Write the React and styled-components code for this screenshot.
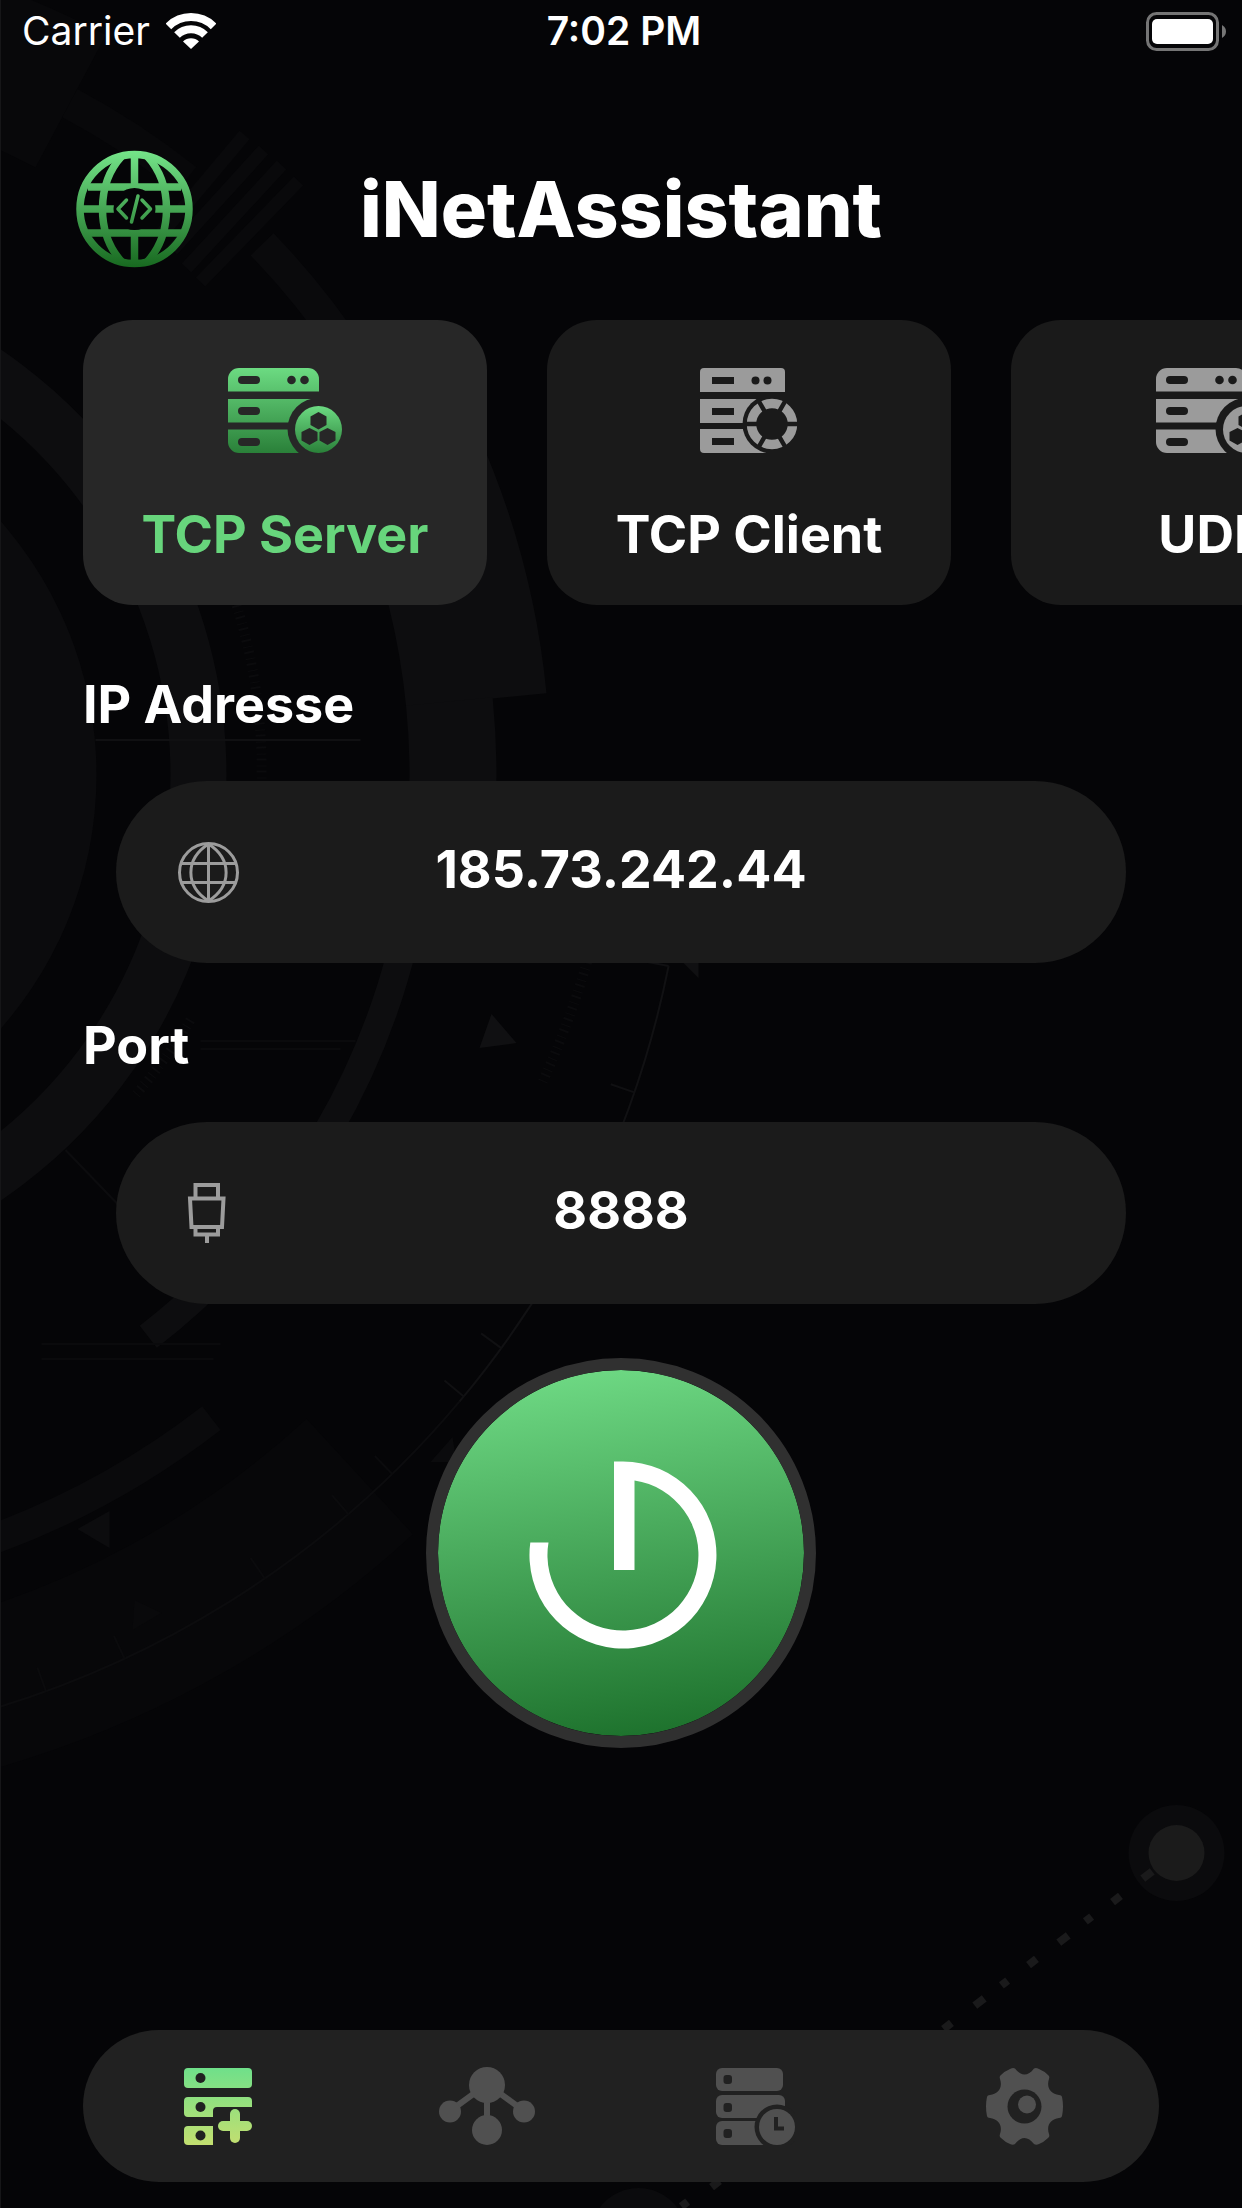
import { useId, useState } from 'react';
import styled, { createGlobalStyle } from 'styled-components';

const GlobalStyle = createGlobalStyle`
  *,
  *::before,
  *::after {
    box-sizing: border-box;
  }

  body {
    margin: 0;
    background-color: #050507;
    color: #fff;
    font-family: Inter, 'Liberation Sans', sans-serif;
  }

  button,
  input {
    font: inherit;
    color: inherit;
    border: none;
    background: none;
    padding: 0;
    margin: 0;
  }

  button {
    cursor: pointer;
  }

  svg {
    display: block;
    flex-shrink: 0;
  }
`;

const Screen = styled.div`
  position: relative;
  isolation: isolate;
  overflow: hidden;
  min-height: 100vh;
  display: flex;
  flex-direction: column;
  padding-bottom: 26px;
`;

const BackdropSvg = styled.svg`
  position: absolute;
  inset: 0;
  z-index: -1;
  width: 100%;
  height: 100%;
  border-left: 1px solid #161618;
`;

const StatusBar = styled.div`
  display: grid;
  grid-template-columns: 1fr auto 1fr;
  align-items: center;
  height: 62px;
  padding: 0 16px 0 22px;
  font-size: 39px;
  line-height: 48px;
`;

const Network = styled.div`
  display: flex;
  align-items: center;
  gap: 16px;
`;

const Time = styled.time`
  font-weight: 600;
`;

const Battery = styled.div`
  display: flex;
  justify-content: flex-end;
`;

const Header = styled.header`
  display: grid;
  grid-template-columns: 118px 1fr 118px;
  align-items: center;
  margin-top: 88px;
  padding: 0 76px;
`;

const Title = styled.h1`
  margin: 0;
  font-size: 77px;
  font-weight: 800;
  line-height: 96px;
  text-align: center;
`;

const Modes = styled.nav`
  display: flex;
  gap: 60px;
  margin-top: 52px;
  padding: 0 83px;
  overflow-x: auto;
  scrollbar-width: none;
`;

const ModeCard = styled.button`
  flex: 0 0 404px;
  display: flex;
  flex-direction: column;
  align-items: center;
  gap: 50px;
  padding: 48px 0 38px;
  border-radius: 50px;
  background-color: ${(props) => (props.$active ? '#272727' : '#1a1a1a')};
  color: ${(props) => (props.$active ? '#67d57c' : '#fff')};
  font-size: 52px;
  font-weight: 700;
  line-height: 64px;
`;

const Form = styled.form`
  display: flex;
  flex-direction: column;
  gap: 51px;
  margin-top: 68px;
  padding: 0 83px;
`;

const FormRow = styled.div`
  display: flex;
  flex-direction: column;
  gap: 44px;
`;

const Label = styled.label`
  font-size: 52px;
  font-weight: 700;
  line-height: 64px;
`;

const Field = styled.div`
  display: grid;
  grid-template-columns: 61px 1fr 61px;
  align-items: center;
  height: 182px;
  margin: 0 33px;
  padding: 0 62px;
  border-radius: 91px;
  background-color: #1b1b1b;
  color: #9c9c9c;
`;

const Input = styled.input`
  width: 100%;
  min-width: 0;
  padding-bottom: 4px;
  color: #fff;
  font-size: 52px;
  font-weight: 700;
  line-height: 64px;
  text-align: center;
  outline: none;
`;

const PowerButton = styled.button`
  align-self: center;
  display: grid;
  place-items: center;
  width: 390px;
  height: 390px;
  margin: 54px 0;
  border: 12px solid #303030;
  border-radius: 50%;
  background: linear-gradient(172deg, #72de88, #196c28) padding-box;
`;

const TabBar = styled.nav`
  display: grid;
  grid-template-columns: repeat(4, 1fr);
  height: 152px;
  margin: auto 83px 0;
  border-radius: 76px;
  background-color: #212121;
`;

const Tab = styled.button`
  display: grid;
  place-items: center;
  color: #505050;
`;

// Rings of the backdrop share one centre, angles are in degrees below the horizon
const CX = -288;
const CY = 775;

function polar(r, deg) {
  const a = (deg * Math.PI) / 180;
  return [CX + r * Math.cos(a), CY + r * Math.sin(a)];
}

function Arc({ from, to, inner, outer, color = '#0d0d0f' }) {
  const r = (inner + outer) / 2;
  const [x1, y1] = polar(r, from);
  const [x2, y2] = polar(r, to);

  return (
    <path
      d={`M${x1} ${y1}A${r} ${r} 0 0 1 ${x2} ${y2}`}
      fill='none'
      stroke={color}
      strokeWidth={outer - inner}
    />
  );
}

const ticks = [11.3, 19, 36, 39.6, 45.8, 49.3, 55.5, 65, 70];

const hatches = [
  [244, 135, 160, 235],
  [263, 150, 172, 250],
  [281, 165, 186, 268],
  [298, 181, 200, 282],
];

// x, y and length of every dash on the route between the two nodes
const dashes = [
  [1147, 1875, 12],
  [1116, 1899, 10],
  [1088, 1919, 8],
  [1063, 1939, 12],
  [1032, 1962, 10],
  [1004, 1983, 8],
  [979, 2002, 12],
  [947, 2026, 10],
  [715, 2184, 10],
  [684, 2204, 8],
];

function Backdrop() {
  return (
    <BackdropSvg
      viewBox='0 0 1242 2208'
      preserveAspectRatio='xMidYMid slice'
      aria-hidden='true'
    >
      <circle cx={CX} cy={CY} r='384' fill='#0b0b0d' />
      <Arc from={-70} to={70} inner={458} outer={514} />
      <Arc from={-80} to={-62} inner={688} outer={838} color='#08080a' />
      <Arc from={-62} to={-51.5} inner={745} outer={777} color='#08080a' />
      <Arc from={-44} to={-24} inner={748} outer={780} color='#0a0a0c' />
      <Arc from={-24} to={-5.6} inner={697} outer={838} />
      <Arc from={-5.7} to={8} inner={697} outer={784} />
      <Arc from={8} to={52.2} inner={697} outer={725} />
      <Arc from={52.2} to={75} inner={799} outer={829} color='#0a0a0c' />
      <Arc from={47.3} to={76} inner={876} outer={1033} color='#070709' />
      <Arc from={11.3} to={40} inner={974} outer={976} color='#111113' />
      <Arc from={40} to={76} inner={974} outer={976} color='#0c0c0e' />

      {ticks.map((deg) => {
        const [x1, y1] = polar(975, deg);
        const [x2, y2] = polar(950, deg);
        return (
          <line
            key={deg}
            x1={x1}
            y1={y1}
            x2={x2}
            y2={y2}
            stroke={deg > 40 ? '#0b0b0d' : '#101012'}
            strokeWidth='2'
          />
        );
      })}

      <g stroke='#09090b' strokeWidth='13'>
        {hatches.map(([x1, y1, x2, y2]) => (
          <line key={x1} x1={x1} y1={y1} x2={x2} y2={y2} />
        ))}
      </g>

      <g fill='none' stroke='#0b0b0d' strokeWidth='10' strokeDasharray='2 5 1 4'>
        <path d='M236 605A549 549 0 0 1 261 781' />
        <path d='M590 950A894 894 0 0 1 542 1082' />
        <path d='M190 1020A540 540 0 0 1 135 1095' />
      </g>

      <g fill='#101012'>
        <path d='M491 1014L479 1048L516 1043Z' />
        <path d='M683 963H698V978Z' />
        <path d='M77 1529L109 1511V1548Z' fill='#0c0c0e' />
        <path d='M430 1462L452 1437L456 1462Z' fill='#0b0b0d' />
        <path d='M134 1600L161 1613L132 1630Z' fill='#09090b' />
      </g>

      <g stroke='#101012' strokeWidth='2'>
        <path d='M95 740H360' />
        <path d='M200 1041H355M200 1049H340' stroke='#0a0a0c' />
        <path d='M41 1344H220M41 1359H213' stroke='#0a0a0c' />
        <path d='M65 1150L118 1205' stroke='#0c0c0e' />
      </g>

      <circle cx='1176' cy='1853' r='48' fill='#0b0b0d' />
      <circle cx='638' cy='2236' r='48' fill='#0b0b0d' />
      {dashes.map(([x, y, length]) => (
        <rect
          key={x}
          x={-length / 2}
          y='-4'
          width={length}
          height='8'
          fill='#1a1a1b'
          transform={`translate(${x} ${y}) rotate(-38)`}
        />
      ))}
      <circle cx='1176' cy='1853' r='28' fill='#1b1b1b' />
    </BackdropSvg>
  );
}

function WifiIcon() {
  return (
    <svg width='50' height='37' viewBox='0 0 50 37' fill='none' aria-hidden='true'>
      <g stroke='#fff' strokeWidth='8'>
        <path d='M2.4 13.4A32 32 0 0 1 47.6 13.4' />
        <path d='M11 22A19.8 19.8 0 0 1 39 22' />
      </g>
      <path d='M25 36L17 28.5A11.5 11.5 0 0 1 33 28.5Z' fill='#fff' />
    </svg>
  );
}

function BatteryIcon() {
  return (
    <svg width='80' height='39' viewBox='0 0 80 39' fill='none' aria-label='Battery'>
      <rect x='1.5' y='1.5' width='70' height='36' rx='9' stroke='#757575' strokeWidth='3' />
      <rect x='6' y='7' width='61' height='25' rx='5' fill='#fff' />
      <path d='M76 13C79 15 80 17 80 19.5S79 24 76 26Z' fill='#757575' />
    </svg>
  );
}

function Logo() {
  const id = useId();

  return (
    <svg width='118' height='118' viewBox='0 0 118 118' fill='none' aria-hidden='true'>
      <defs>
        <linearGradient id={`${id}g`} gradientUnits='userSpaceOnUse' x1='59' y1='0' x2='59' y2='118'>
          <stop offset='0' stopColor='#75e58a' />
          <stop offset='1' stopColor='#17681f' />
        </linearGradient>
        <mask id={`${id}m`} maskUnits='userSpaceOnUse' x='0' y='0' width='118' height='118'>
          <path d='M0 0H118V118H0Z' fill='#fff' />
          <circle cx='58.5' cy='59' r='21' fill='#000' />
        </mask>
      </defs>
      <g stroke={`url(#${id}g)`}>
        <g mask={`url(#${id}m)`} strokeWidth='7.5'>
          <circle cx='58.5' cy='59' r='54.5' strokeWidth='7.5' />
          <path d='M58.5 5V38M58.5 84V113' />
          <path d='M12 37H105M12 83H105M6 59H112' />
          <path d='M46 6C20 34 20 84 46 112M71 6C97 34 97 84 71 112' />
        </g>
        <path
          d='M50.5 50L42 59L50.5 68M66 50L74.5 59L66 68M62 46L55.5 72'
          strokeWidth='3.5'
          strokeLinecap='round'
          strokeLinejoin='round'
        />
      </g>
    </svg>
  );
}

function ServerIcon({ green }) {
  const id = useId();
  const bars = green ? `url(#${id}g)` : '#9b9b9b';
  const badge = green ? `url(#${id}b)` : '#9b9b9b';

  return (
    <svg width='115' height='85' viewBox='0 0 115 85' aria-hidden='true'>
      <defs>
        <linearGradient id={`${id}g`} gradientUnits='userSpaceOnUse' x1='0' y1='0' x2='0' y2='85'>
          <stop offset='0' stopColor='#6cdb82' />
          <stop offset='1' stopColor='#2a8039' />
        </linearGradient>
        <linearGradient id={`${id}b`} gradientUnits='userSpaceOnUse' x1='0' y1='38' x2='0' y2='85'>
          <stop offset='0' stopColor='#6cdb82' />
          <stop offset='1' stopColor='#2a8039' />
        </linearGradient>
        <mask id={`${id}m`} maskUnits='userSpaceOnUse' x='0' y='0' width='115' height='85'>
          <path d='M0 0H115V85H0Z' fill='#fff' />
          <rect x='10' y='8' width='22' height='8' rx='4' />
          <rect x='10' y='39' width='22' height='8' rx='4' />
          <rect x='10' y='70' width='22' height='8' rx='4' />
          <circle cx='63.5' cy='12' r='4.3' />
          <circle cx='76.5' cy='12' r='4.3' />
          <circle cx='90.5' cy='61' r='31' />
        </mask>
        <mask id={`${id}h`} maskUnits='userSpaceOnUse' x='60' y='30' width='55' height='55'>
          <path d='M60 30H115V85H60Z' fill='#fff' />
          <path d='M90.5 44L98.5 48.5V57L90.5 61.5L82.5 57V48.5Z' />
          <path d='M81.5 60L89.5 64V72.5L81.5 77L73.5 72.5V64Z' />
          <path d='M99.5 60L107.5 64V72.5L99.5 77L91.5 72.5V64Z' />
        </mask>
      </defs>
      <g mask={`url(#${id}m)`} fill={bars}>
        <path d='M0 23.5V11A11 11 0 0 1 11 0H80A11 11 0 0 1 91 11V23.5Z' />
        <path d='M0 31H91V54.5H0Z' />
        <path d='M0 61.5H91V85H11A11 11 0 0 1 0 74Z' />
      </g>
      <circle cx='90.5' cy='61.5' r='23.5' fill={badge} mask={`url(#${id}h)`} />
    </svg>
  );
}

function ClientIcon() {
  const id = useId();

  return (
    <svg width='98' height='85' viewBox='0 0 98 85' aria-hidden='true'>
      <defs>
        <mask id={`${id}m`} maskUnits='userSpaceOnUse' x='0' y='0' width='98' height='85'>
          <path d='M0 0H98V85H0Z' fill='#fff' />
          <path d='M12 9H34V16H12ZM12 40H34V47H12ZM12 70H34V77H12Z' />
          <circle cx='55.5' cy='12.5' r='4' />
          <circle cx='67.5' cy='12.5' r='4' />
          <circle cx='72' cy='56' r='29.5' />
        </mask>
        <mask id={`${id}r`} maskUnits='userSpaceOnUse' x='44' y='28' width='56' height='57'>
          <path d='M44 28H100V85H44Z' fill='#fff' />
          <path
            d='M42 56H102M57 30L87 82M87 30L57 82'
            stroke='#000'
            strokeWidth='4.5'
          />
        </mask>
      </defs>
      <g mask={`url(#${id}m)`} fill='#9b9b9b'>
        <path d='M0 24V4A4 4 0 0 1 4 0H81A4 4 0 0 1 85 4V24Z' />
        <path d='M0 31H60V55H0Z' />
        <path d='M0 61H70V85H4A4 4 0 0 1 0 81Z' />
      </g>
      <circle
        cx='72'
        cy='56'
        r='20.5'
        fill='none'
        stroke='#9b9b9b'
        strokeWidth='9.5'
        mask={`url(#${id}r)`}
      />
    </svg>
  );
}

function GlobeIcon() {
  return (
    <svg width='61' height='61' viewBox='0 0 61 61' fill='none' stroke='currentColor' strokeWidth='3' aria-hidden='true'>
      <circle cx='30.5' cy='30.5' r='29' />
      <path d='M30.5 2V59M4 21.5H57M4 40.5H57' />
      <path d='M30.5 2C7 17 7 44 30.5 59M30.5 2C54 17 54 44 30.5 59' />
    </svg>
  );
}

function CableIcon() {
  return (
    <svg width='57' height='61' viewBox='-10 0 57 61' fill='none' stroke='currentColor' strokeWidth='4' aria-hidden='true'>
      <path d='M7.5 15V2H30V15' />
      <path d='M2 15.5H35.5L34 44H3.5Z' />
      <path d='M7.5 44V51.5H30V44M19 52V60' />
    </svg>
  );
}

function PowerIcon() {
  return (
    <svg width='200' height='200' viewBox='-6 -6 200 200' fill='#fff' aria-hidden='true'>
      <path d='M87 2.5H96A93.5 93.5 0 1 1 3.3 83.5H21.5A75.5 75.5 0 1 0 107.5 21.4V111H87Z' />
    </svg>
  );
}

function AddServerIcon() {
  const id = useId();

  return (
    <svg width='68' height='77' viewBox='0 0 68 77' aria-hidden='true'>
      <defs>
        <linearGradient id={id} gradientUnits='userSpaceOnUse' x1='0' y1='0' x2='0' y2='77'>
          <stop offset='0' stopColor='#6fe08a' />
          <stop offset='1' stopColor='#c3df70' />
        </linearGradient>
      </defs>
      <g fill={`url(#${id})`}>
        <rect width='68' height='20' rx='4' />
        <path d='M4 29H64A4 4 0 0 1 68 33V39H33A4 4 0 0 0 29 43V49H4A4 4 0 0 1 0 45V33A4 4 0 0 1 4 29Z' />
        <path d='M4 58H29V77H4A4 4 0 0 1 0 73V62A4 4 0 0 1 4 58Z' />
        <rect x='34' y='53' width='34' height='10' rx='5' />
        <rect x='46' y='41' width='10' height='34' rx='5' />
      </g>
      <g fill='#212121'>
        <circle cx='16.5' cy='10' r='5' />
        <circle cx='16.5' cy='39' r='5' />
        <circle cx='16.5' cy='67.5' r='5' />
      </g>
    </svg>
  );
}

function NodesIcon() {
  return (
    <svg width='96' height='78' viewBox='0 0 96 78' fill='currentColor' aria-hidden='true'>
      <path d='M11 44L48 17L85 44M48 17V62' fill='none' stroke='currentColor' strokeWidth='6' />
      <circle cx='48' cy='18' r='18' />
      <circle cx='11' cy='44.5' r='11' />
      <circle cx='85' cy='44.5' r='11' />
      <circle cx='48' cy='63' r='15' />
    </svg>
  );
}

function HistoryIcon() {
  return (
    <svg width='79' height='77' viewBox='0 0 79 77' fill='currentColor' aria-hidden='true'>
      <rect width='67' height='23' rx='6' />
      <rect y='27' width='69' height='23' rx='6' />
      <rect y='53' width='67' height='24' rx='6' />
      <g fill='#212121'>
        <rect x='7.5' y='7' width='8.5' height='9' rx='3' />
        <rect x='7.5' y='35' width='8.5' height='9' rx='3' />
        <rect x='7.5' y='61' width='8.5' height='9' rx='3' />
        <circle cx='61' cy='59' r='22.5' />
      </g>
      <circle cx='61' cy='59' r='18' />
      <path d='M60 49V60.5H68' fill='none' stroke='#212121' strokeWidth='4' />
    </svg>
  );
}

function GearIcon() {
  return (
    <svg width='77' height='77' viewBox='0 0 77 77' fill='currentColor' aria-hidden='true'>
      <path d='M29 .5Q27 -.5 24 1Q19 3 15 7Q13 8 14 11C17 20 12 26 4 27Q1 27 .8 30Q-.8 38 .8 47Q1 50 4 50C12 51 17 57 14 66Q13 69 15 70Q19 74 24 76Q27 77.5 29 76C35 68 42 68 48 76Q50 77.5 53 76Q58 74 62 70Q64 69 63 66C60 57 65 51 73 50Q76 50 76.2 47Q77.8 38 76.2 30Q76 27 73 27C65 26 60 20 63 11Q64 8 62 7Q58 3 53 1Q50 -.5 48 .5C42 8.5 35 8.5 29 .5Z' />
      <circle cx='38.5' cy='38.5' r='17' fill='#212121' />
      <circle cx='41' cy='36.5' r='9' />
    </svg>
  );
}

const modes = [
  { name: 'TCP Server', icon: (active) => <ServerIcon green={active} /> },
  { name: 'TCP Client', icon: () => <ClientIcon /> },
  { name: 'UDP', icon: (active) => <ServerIcon green={active} /> },
];

function App() {
  const [mode, setMode] = useState('TCP Server');
  const [ip, setIp] = useState('185.73.242.44');
  const [port, setPort] = useState('8888');

  return (
    <>
      <GlobalStyle />
      <Screen>
        <Backdrop />

        <StatusBar>
          <Network>
            Carrier
            <WifiIcon />
          </Network>
          <Time>7:02 PM</Time>
          <Battery>
            <BatteryIcon />
          </Battery>
        </StatusBar>

        <Header>
          <Logo />
          <Title>iNetAssistant</Title>
        </Header>

        <Modes>
          {modes.map(({ name, icon }) => (
            <ModeCard
              key={name}
              type='button'
              $active={mode === name}
              onClick={() => setMode(name)}
            >
              {icon(mode === name)}
              <span>{name}</span>
            </ModeCard>
          ))}
        </Modes>

        <Form onSubmit={(e) => e.preventDefault()}>
          <FormRow>
            <Label htmlFor='ip'>IP Adresse</Label>
            <Field>
              <GlobeIcon />
              <Input id='ip' value={ip} onChange={(e) => setIp(e.target.value)} />
            </Field>
          </FormRow>
          <FormRow>
            <Label htmlFor='port'>Port</Label>
            <Field>
              <CableIcon />
              <Input
                id='port'
                inputMode='numeric'
                value={port}
                onChange={(e) => setPort(e.target.value)}
              />
            </Field>
          </FormRow>
        </Form>

        <PowerButton type='button' aria-label='Start'>
          <PowerIcon />
        </PowerButton>

        <TabBar>
          <Tab type='button' aria-label='Connect'>
            <AddServerIcon />
          </Tab>
          <Tab type='button' aria-label='Network'>
            <NodesIcon />
          </Tab>
          <Tab type='button' aria-label='History'>
            <HistoryIcon />
          </Tab>
          <Tab type='button' aria-label='Settings'>
            <GearIcon />
          </Tab>
        </TabBar>
      </Screen>
    </>
  );
}

export default App;
